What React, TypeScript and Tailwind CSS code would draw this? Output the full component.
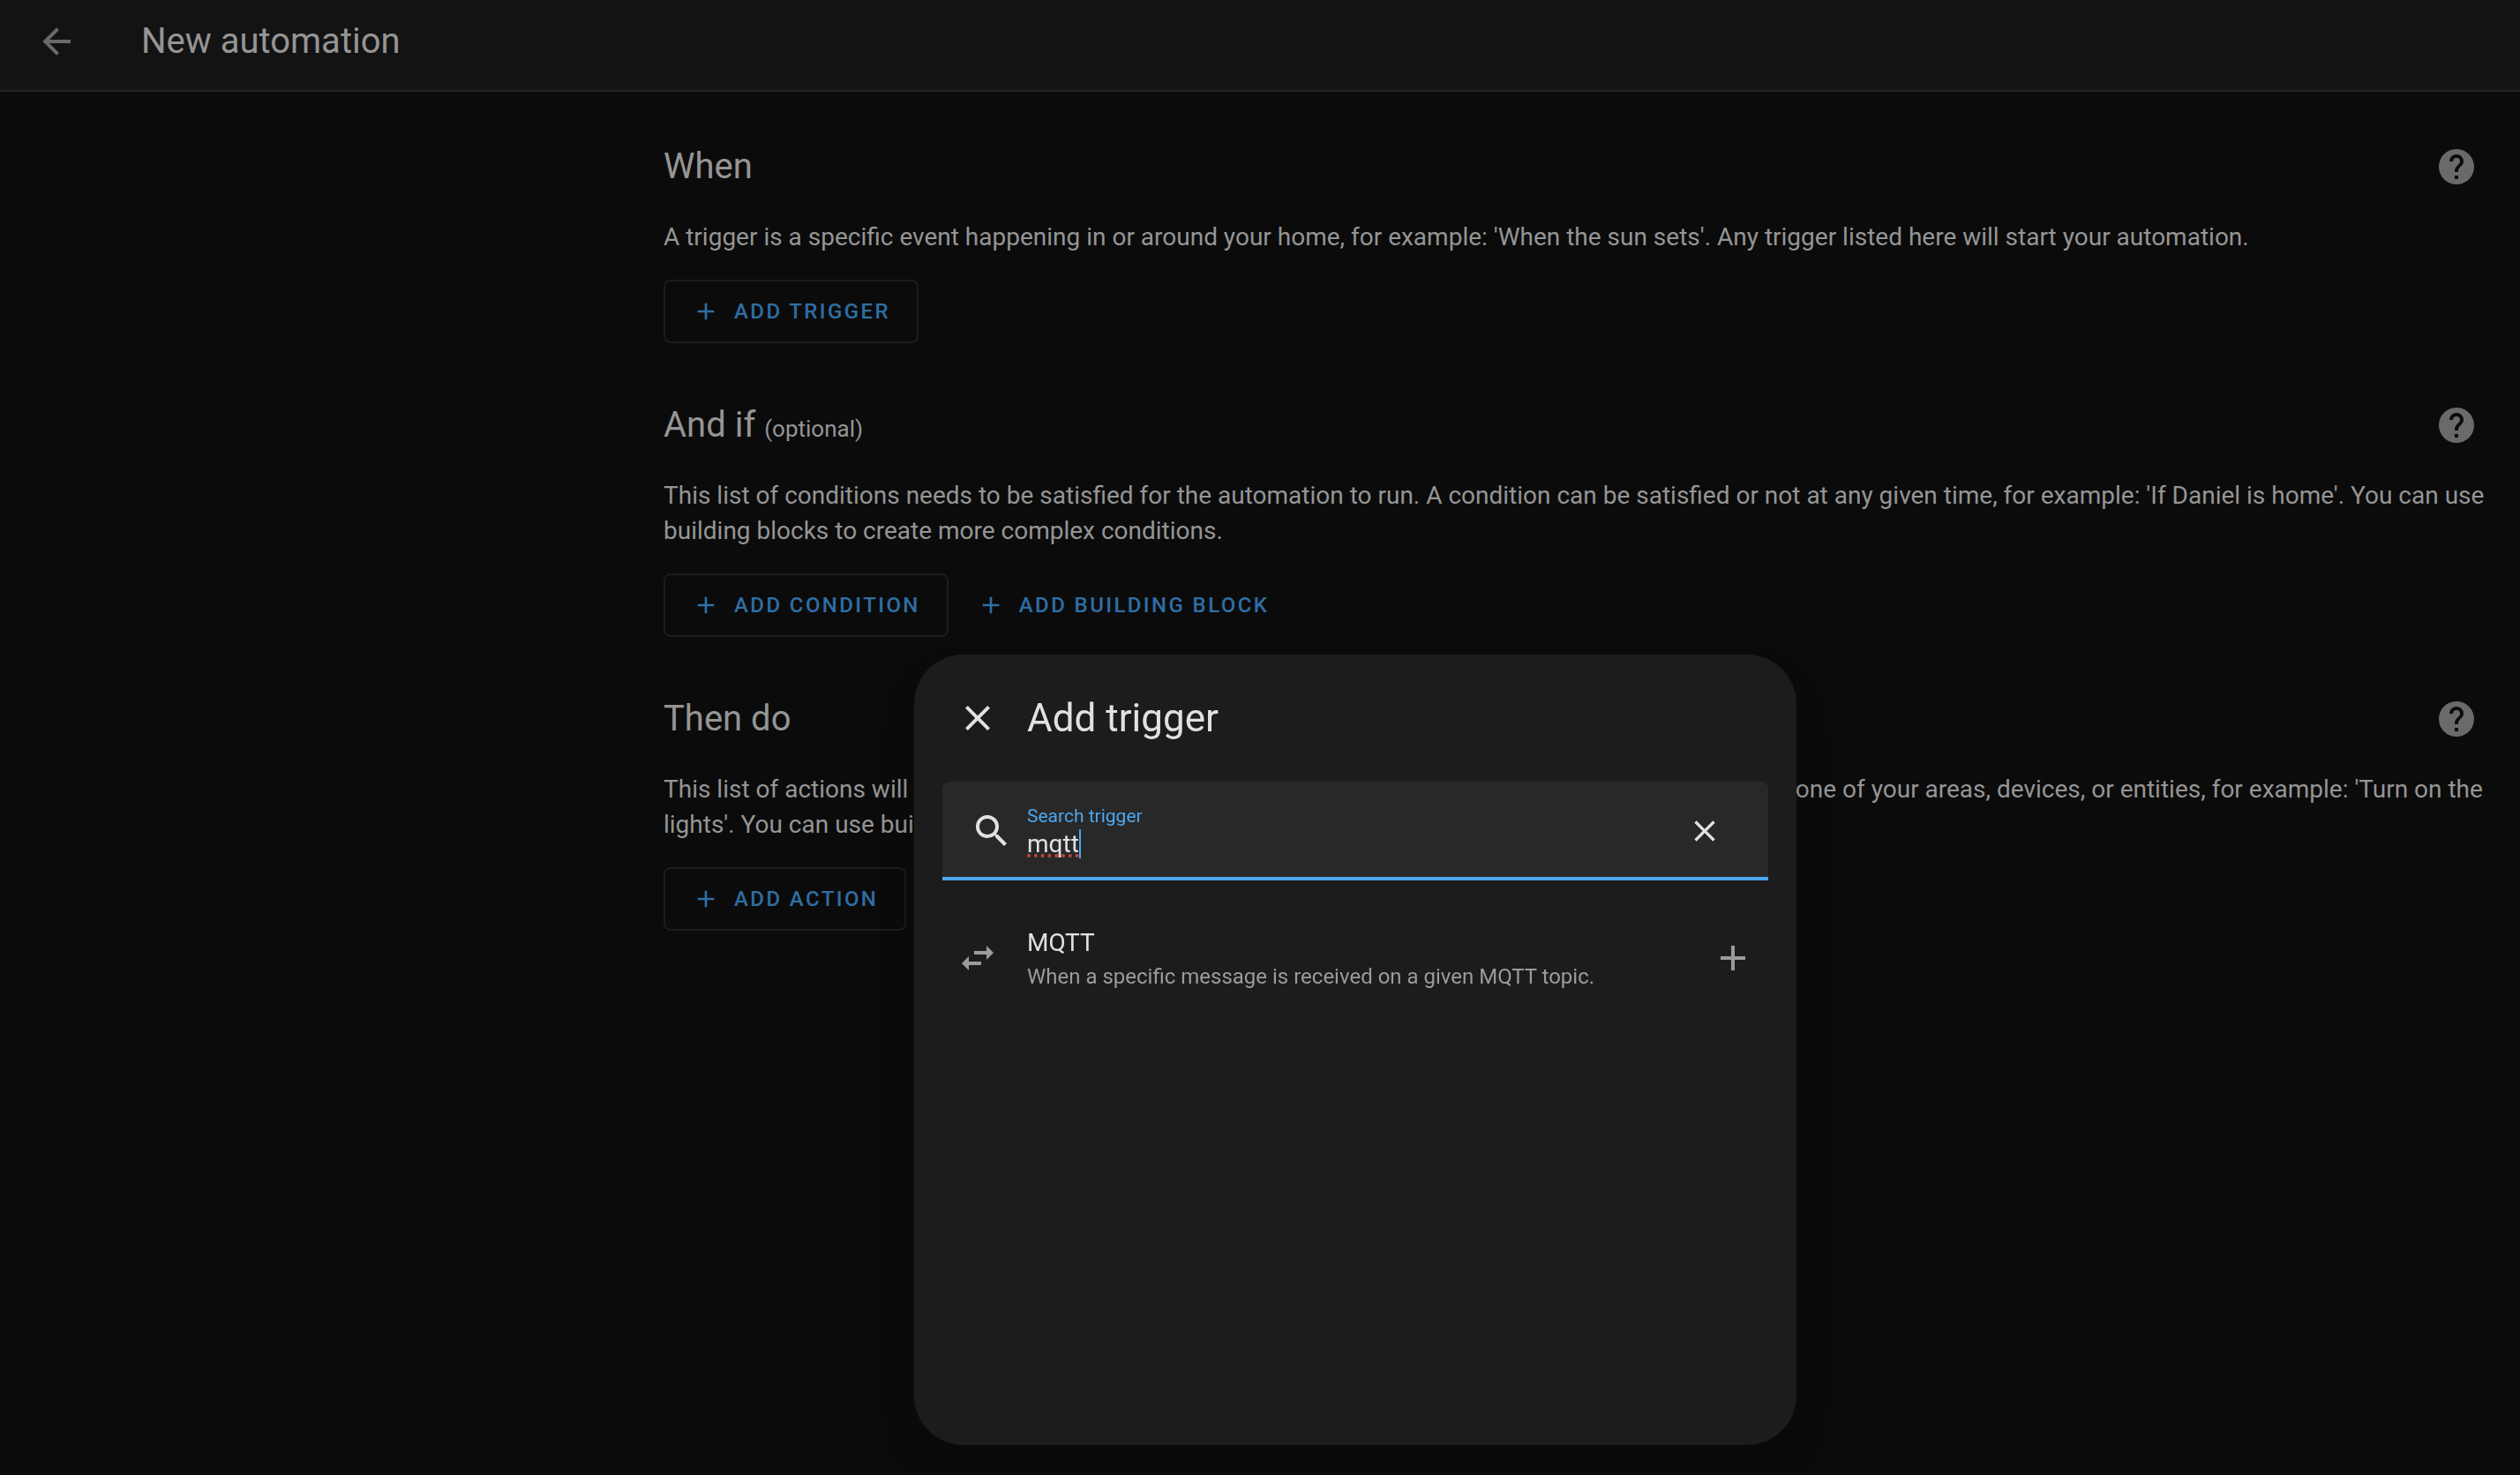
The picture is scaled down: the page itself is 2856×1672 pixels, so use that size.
import { useState } from "react";
import type { ReactNode } from "react";

const ICONS = {
  back: "M20 11v2H8l5.5 5.5-1.42 1.42L4.16 12l7.92-7.92L13.5 5.5 8 11h12z",
  plus: "M19 13h-6v6h-2v-6H5v-2h6V5h2v6h6v2z",
  close:
    "M19 6.41L17.59 5 12 10.59 6.41 5 5 6.41 10.59 12 5 17.59 6.41 19 12 13.41 17.59 19 19 17.59 13.41 12 19 6.41z",
  help: "M15.07 11.25l-.9.92C13.45 12.89 13 13.5 13 15h-2v-.5c0-1.11.45-2.11 1.17-2.83l1.24-1.26c.37-.36.59-.86.59-1.41a2 2 0 0 0-2-2 2 2 0 0 0-2 2H8a4 4 0 0 1 4-4 4 4 0 0 1 4 4c0 .88-.36 1.67-.93 2.25M13 19h-2v-2h2M12 2A10 10 0 0 0 2 12a10 10 0 0 0 10 10 10 10 0 0 0 10-10c0-5.53-4.5-10-10-10z",
  search:
    "M9.5 3A6.5 6.5 0 0 1 16 9.5c0 1.61-.59 3.09-1.56 4.23l.27.27h.79l5 5-1.5 1.5-5-5v-.79l-.27-.27A6.516 6.516 0 0 1 9.5 16 6.5 6.5 0 0 1 3 9.5 6.5 6.5 0 0 1 9.5 3m0 2C7 5 5 7 5 9.5S7 14 9.5 14 14 12 14 9.5 12 5 9.5 5z",
  swap: "M21 9l-4-4v3h-7v2h7v3M7 11l-4 4 4 4v-3h7v-2H7v-3z",
};

function Icon({ name, className }: { name: keyof typeof ICONS; className: string }) {
  return (
    <svg viewBox="0 0 24 24" fill="currentColor" aria-hidden="true" className={className}>
      <path d={ICONS[name]} />
    </svg>
  );
}

function AddButton({ label, outlined = true }: { label: string; outlined?: boolean }) {
  return (
    <button
      type="button"
      className={
        outlined
          ? "flex h-[72px] items-center gap-4 rounded-lg border-2 border-[#1c1c1c] px-[30px] text-[24px] font-medium tracking-widest text-[#2f6ea3] uppercase"
          : "flex h-[72px] items-center gap-4 rounded-lg px-4 text-[24px] font-medium tracking-widest text-[#2f6ea3] uppercase"
      }
    >
      <Icon name="plus" className="size-8" />
      {label}
    </button>
  );
}

function Section({
  title,
  note,
  description,
  children,
}: {
  title: string;
  note?: string;
  description: string;
  children: ReactNode;
}) {
  return (
    <section>
      <div className="flex h-24 items-center justify-between">
        <h2 className="text-[40px] leading-12 text-[#959595]">
          {title} {note && <span className="text-[26px] leading-none">{note}</span>}
        </h2>
        <button type="button" aria-label={`Help: ${title}`} className="p-6 text-[#6a6a6a]">
          <Icon name="help" className="size-12" />
        </button>
      </div>
      <p className="mt-3 text-[28px] leading-10 text-[#959595]">{description}</p>
      <div className="mt-7 flex gap-4">{children}</div>
    </section>
  );
}

function TriggerDialog() {
  const [query, setQuery] = useState("mqtt");
  return (
    <div
      role="dialog"
      aria-labelledby="dialog-title"
      className="flex h-[896px] w-[1000px] flex-col rounded-[56px] bg-[#1c1c1c] px-8 shadow-2xl"
    >
      <header className="flex h-36 items-center gap-8 px-4 text-[#e1e1e1]">
        <button type="button" aria-label="Close">
          <Icon name="close" className="size-12" />
        </button>
        <h1 id="dialog-title" className="text-[44px] leading-14">
          Add trigger
        </h1>
      </header>
      <div className="flex h-28 items-center gap-4 rounded-t-lg border-b-4 border-[#4ba6ee] bg-[#282828] pt-1 pr-12 pl-8 text-[#e1e1e1]">
        <Icon name="search" className="size-12" />
        <div className="flex flex-1 flex-col">
          <label htmlFor="search" className="text-[21px] leading-[30px] text-[#4ba6ee]">
            Search trigger
          </label>
          <div className="relative">
            <svg
              aria-hidden="true"
              viewBox="0 0 64 34"
              className="absolute top-0 left-0 h-[34px] w-16"
            >
              {[0, 1, 2, 3, 4, 5, 6, 7].map((i) => (
                <circle key={i} cx={2 + i * 7.8} cy="30" r="2" fill="#c5473b" />
              ))}
              <rect x="59" y="0" width="2" height="33" fill="#4ba6ee" />
            </svg>
            <input
              id="search"
              type="text"
              value={query}
              onChange={(e) => setQuery(e.target.value)}
              className="relative block h-[34px] w-full bg-transparent text-[28px] leading-[34px] outline-none"
            />
          </div>
        </div>
        <button type="button" aria-label="Clear" className="px-1">
          <Icon name="close" className="size-10" />
        </button>
      </div>
      <ul className="mt-4">
        <li>
          <button
            type="button"
            className="flex h-36 w-full items-center gap-8 px-4 text-left text-[#9b9b9b]"
          >
            <Icon name="swap" className="size-12" />
            <span className="flex flex-1 flex-col pt-0.5">
              <span className="text-[28px] leading-10 text-[#e1e1e1]">MQTT</span>
              <span className="text-[24px] leading-9">
                When a specific message is received on a given MQTT topic.
              </span>
            </span>
            <Icon name="plus" className="size-12" />
          </button>
        </li>
      </ul>
    </div>
  );
}

export default function App() {
  return (
    <div className="min-h-screen bg-[#0b0b0b] font-['Roboto',sans-serif] antialiased">
      <header className="flex h-[104px] items-center gap-[72px] border-b-2 border-[#242424] bg-[#131313] px-10 pb-2">
        <button type="button" aria-label="Back" className="text-[#6a6a6a]">
          <Icon name="back" className="size-12" />
        </button>
        <h1 className="text-[40px] leading-12 text-[#959595]">New automation</h1>
      </header>
      <main className="mt-[37px] mr-6 ml-auto flex max-w-[2080px] flex-col gap-[45px]">
        <Section
          title="When"
          description="A trigger is a specific event happening in or around your home, for example: 'When the sun sets'. Any trigger listed here will start your automation."
        >
          <AddButton label="Add trigger" />
        </Section>
        <Section
          title="And if"
          note="(optional)"
          description="This list of conditions needs to be satisfied for the automation to run. A condition can be satisfied or not at any given time, for example: 'If Daniel is home'. You can use building blocks to create more complex conditions."
        >
          <AddButton label="Add condition" />
          <AddButton label="Add building block" outlined={false} />
        </Section>
        <Section
          title="Then do"
          description="This list of actions will be performed in sequence when the automation runs. An action usually controls one of your areas, devices, or entities, for example: 'Turn on the lights'. You can use building blocks to create more complex sequences of actions."
        >
          <AddButton label="Add action" />
          <AddButton label="Add building block" outlined={false} />
        </Section>
      </main>
      <div className="fixed inset-0 flex items-end justify-center pb-[34px] pl-[216px]">
        <TriggerDialog />
      </div>
    </div>
  );
}
